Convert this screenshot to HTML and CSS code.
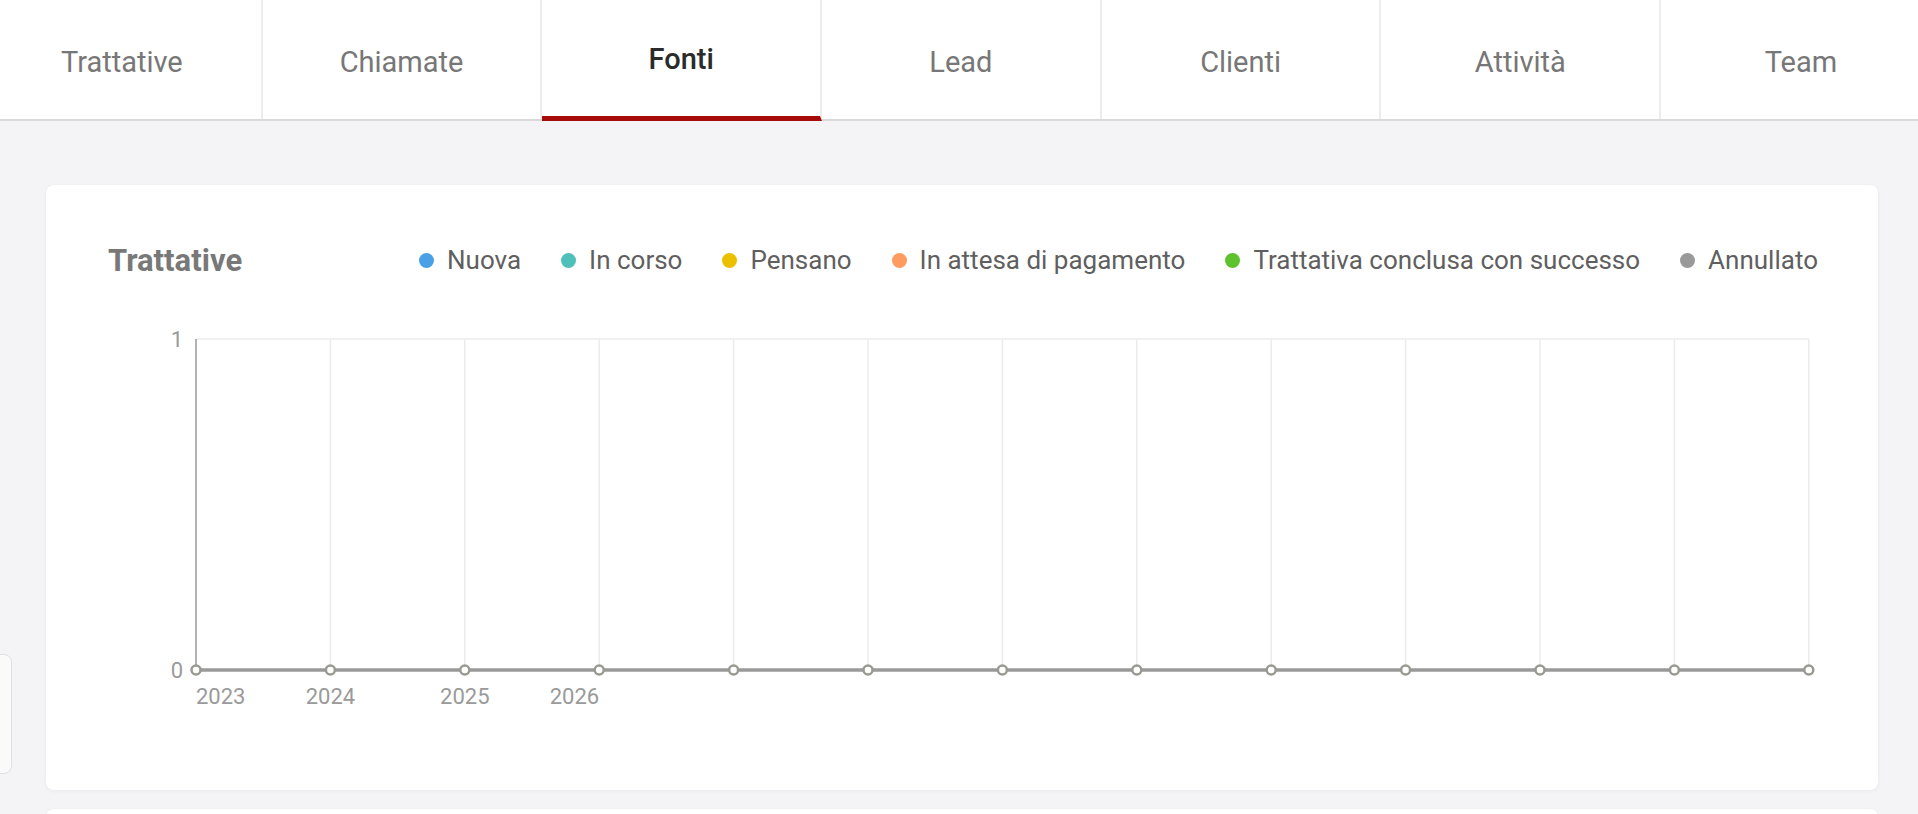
FILE: index.html
```html
<!DOCTYPE html>
<html lang="it">
<head>
<meta charset="utf-8">
<title>Fonti</title>
<link rel="stylesheet" href="styles.css">
</head>
<body>
<nav class="tabs">
  <div class="tab">Trattative</div>
  <div class="tab">Chiamate</div>
  <div class="tab active">Fonti</div>
  <div class="tab">Lead</div>
  <div class="tab">Clienti</div>
  <div class="tab">Attività</div>
  <div class="tab">Team</div>
</nav>
<main class="content">
  <section class="card">
    <header class="card-head">
      <h2 class="card-title">Trattative</h2>
      <ul class="legend">
        <li class="legend-item"><span class="dot dot-blue"></span>Nuova</li>
        <li class="legend-item"><span class="dot dot-teal"></span>In corso</li>
        <li class="legend-item"><span class="dot dot-yellow"></span>Pensano</li>
        <li class="legend-item"><span class="dot dot-orange"></span>In attesa di pagamento</li>
        <li class="legend-item"><span class="dot dot-green"></span>Trattativa conclusa con successo</li>
        <li class="legend-item"><span class="dot dot-gray"></span>Annullato</li>
      </ul>
    </header>
    <svg class="chart" viewBox="0 0 1832 440" width="1832" height="440">
      <g class="grid">
        <line x1="150" y1="52" x2="1763" y2="52"/>
        <line x1="284.4" y1="52" x2="284.4" y2="383"/>
        <line x1="418.8" y1="52" x2="418.8" y2="383"/>
        <line x1="553.2" y1="52" x2="553.2" y2="383"/>
        <line x1="687.6" y1="52" x2="687.6" y2="383"/>
        <line x1="822" y1="52" x2="822" y2="383"/>
        <line x1="956.4" y1="52" x2="956.4" y2="383"/>
        <line x1="1090.8" y1="52" x2="1090.8" y2="383"/>
        <line x1="1225.2" y1="52" x2="1225.2" y2="383"/>
        <line x1="1359.6" y1="52" x2="1359.6" y2="383"/>
        <line x1="1494" y1="52" x2="1494" y2="383"/>
        <line x1="1628.4" y1="52" x2="1628.4" y2="383"/>
        <line x1="1762.8" y1="52" x2="1762.8" y2="383"/>
      </g>
      <line class="axis" x1="150" y1="52" x2="150" y2="383"/>
      <line class="zero" x1="150" y1="383" x2="1763" y2="383"/>
      <g class="marks">
        <circle cx="150" cy="383" r="4.5"/>
        <circle cx="284.4" cy="383" r="4.5"/>
        <circle cx="418.8" cy="383" r="4.5"/>
        <circle cx="553.2" cy="383" r="4.5"/>
        <circle cx="687.6" cy="383" r="4.5"/>
        <circle cx="822" cy="383" r="4.5"/>
        <circle cx="956.4" cy="383" r="4.5"/>
        <circle cx="1090.8" cy="383" r="4.5"/>
        <circle cx="1225.2" cy="383" r="4.5"/>
        <circle cx="1359.6" cy="383" r="4.5"/>
        <circle cx="1494" cy="383" r="4.5"/>
        <circle cx="1628.4" cy="383" r="4.5"/>
        <circle cx="1762.8" cy="383" r="4.5"/>
      </g>
      <g class="labels">
        <text x="137" y="60" text-anchor="end">1</text>
        <text x="137" y="391" text-anchor="end">0</text>
        <text x="150" y="417" text-anchor="start">2023</text>
        <text x="284.4" y="417" text-anchor="middle">2024</text>
        <text x="418.8" y="417" text-anchor="middle">2025</text>
        <text x="553.2" y="417" text-anchor="end">2026</text>
      </g>
    </svg>
  </section>
  <section class="card card-next"></section>
</main>
<div class="side-peek"></div>
</body>
</html>
```
FILE: styles.css
```css
* { box-sizing: border-box; }
html, body {
  margin: 0;
  padding: 0;
  background: #f4f4f6;
  font-family: Roboto, "Liberation Sans", Arial, sans-serif;
  overflow: hidden;
}
.tabs {
  display: flex;
  height: 121px;
  margin-left: -17px;
  width: 1958px;
  background: #fff;
  border-bottom: 2px solid #d9d9d9;
}
.tab {
  flex: 0 0 279.7px;
  display: flex;
  align-items: center;
  justify-content: center;
  font-size: 29px;
  color: #777;
  border-right: 2px solid #ececec;
  padding-top: 5px;
}
.tab:last-child { border-right: none; }
.tab.active {
  color: #2b2b2b;
  font-weight: 500;
  border-bottom: 5px solid #a50b0b;
  margin-bottom: -2px;
  padding-top: 1px;
}
.content {
  padding: 64px 40px 0 46px;
}
.card {
  width: 1832px;
  height: 605px;
  background: #fff;
  border-radius: 8px;
  box-shadow: 0 1px 4px rgba(0,0,0,0.05);
}
.card-head {
  display: flex;
  align-items: center;
  justify-content: space-between;
  height: 50px;
  padding: 0 60px 0 62px;
  position: relative;
  top: 50px;
}
.card-title {
  margin: 0;
  font-size: 31px;
  font-weight: 700;
  color: #787878;
}
.legend {
  display: flex;
  gap: 40px;
  margin: 0;
  padding: 0;
  list-style: none;
}
.legend-item {
  display: flex;
  align-items: center;
  gap: 13px;
  font-size: 26px;
  color: #5f5f5f;
}
.dot {
  width: 15px;
  height: 15px;
  border-radius: 50%;
}
.dot-blue { background: #4aa0e6; }
.dot-teal { background: #4fc0b9; }
.dot-yellow { background: #ebc000; }
.dot-orange { background: #ff9b5e; }
.dot-green { background: #5ec22e; }
.dot-gray { background: #999; }
.chart {
  display: block;
  margin-top: 52px;
}
.grid line { stroke: #ececec; stroke-width: 1.5; }
.axis { stroke: #999; stroke-width: 1.5; }
.zero { stroke: #999; stroke-width: 3.5; }
.marks circle { fill: #fff; stroke: #989a92; stroke-width: 2.5; }
.labels text {
  font-family: Roboto, "Liberation Sans", Arial, sans-serif;
  font-size: 22px;
  fill: #9a9a9a;
}
.card-next {
  margin-top: 19px;
  height: 100px;
}
.side-peek {
  position: absolute;
  left: -20px;
  top: 654px;
  width: 32px;
  height: 120px;
  background: #fafafa;
  border: 1.5px solid #e0e0e0;
  border-radius: 8px;
}
```
